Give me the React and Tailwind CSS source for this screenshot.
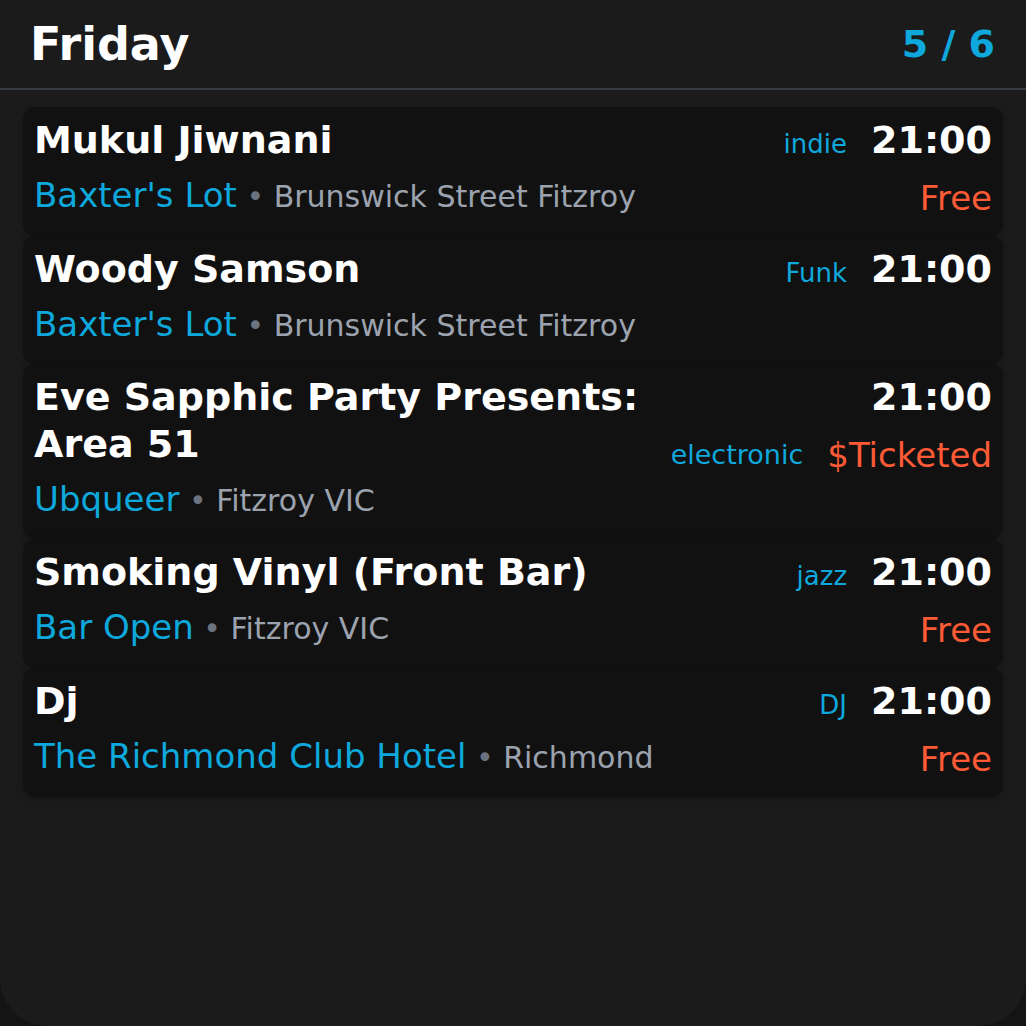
import React from "react";

const events = [
  { title: "Mukul Jiwnani", tag: "indie", time: "21:00", venue: "Baxter's Lot", loc: "Brunswick Street Fitzroy", price: "Free" },
  { title: "Woody Samson", tag: "Funk", time: "21:00", venue: "Baxter's Lot", loc: "Brunswick Street Fitzroy", price: null },
  { title: "Eve Sapphic Party Presents: Area 51", tag: "electronic", time: "21:00", venue: "Ubqueer", loc: "Fitzroy VIC", price: "$Ticketed", tagOnPrice: true },
  { title: "Smoking Vinyl (Front Bar)", tag: "jazz", time: "21:00", venue: "Bar Open", loc: "Fitzroy VIC", price: "Free" },
  { title: "Dj", tag: "DJ", time: "21:00", venue: "The Richmond Club Hotel", loc: "Richmond", price: "Free" },
];

function Card({ e }) {
  return (
    <div className="flex gap-[20px] rounded-[12px] bg-[#111111] px-[11px] pt-[10px] pb-[15px] shadow-[0_2px_8px_rgba(0,0,0,0.2)]">
      <div className="flex min-w-0 flex-1 flex-col">
        <div className="text-[38px] font-bold leading-[47px] text-white">{e.title}</div>
        <div className="mt-[7px] flex items-baseline whitespace-nowrap">
          <span className="text-[34px] leading-[49px] text-[#0ea8dc]">{e.venue}</span>
          <span className="whitespace-pre text-[30px] leading-[40px] text-[#6b7280]"> • </span>
          <span className="text-[30px] leading-[40px] text-[#9ca3af]">{e.loc}</span>
        </div>
      </div>
      <div className="flex shrink-0 flex-col items-end">
        <div className="flex items-baseline gap-[24px]">
          {!e.tagOnPrice && <span className="text-[26px] leading-[30px] text-[#0ea8dc]">{e.tag}</span>}
          <span className="text-[38px] font-bold leading-[47px] text-white">{e.time}</span>
        </div>
        {e.price && (
          <div className="mt-[11px] flex items-center gap-[24px]">
            {e.tagOnPrice && <span className="text-[27px] leading-[30px] text-[#0ea8dc]">{e.tag}</span>}
            <span className="text-[34px] leading-[46px] text-[#ff5a36]">{e.price}</span>
          </div>
        )}
      </div>
    </div>
  );
}

export default function App() {
  return (
    <div className="h-[1026px] w-[1026px] bg-[#141414]" style={{ fontFamily: '"DejaVu Sans", sans-serif' }}>
      <div className="h-full w-full overflow-hidden rounded-b-[48px] bg-[#1b1b1b]">
        <div className="flex h-[90px] items-center justify-between border-b-2 border-[#363b43] pl-[30px] pr-[31px]">
          <div className="text-[46px] font-bold text-white">Friday</div>
          <div className="text-[38px] font-bold text-[#0ea8dc]">5 / 6</div>
        </div>
        <div className="flex flex-col px-[23px] pt-[17px]">
          {events.map((e, i) => (
            <Card key={i} e={e} />
          ))}
        </div>
      </div>
    </div>
  );
}
